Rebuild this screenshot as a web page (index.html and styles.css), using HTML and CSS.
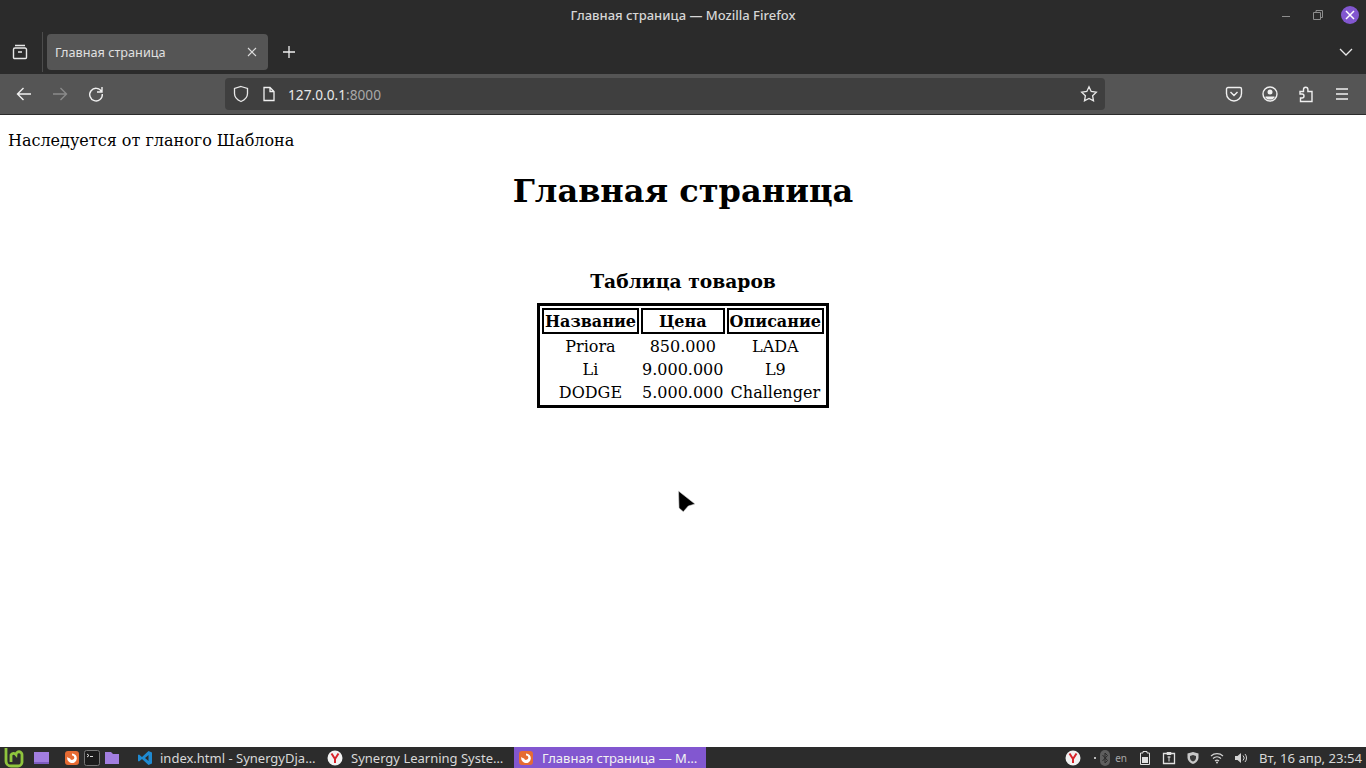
FILE: index.html
```html
<!DOCTYPE html>
<html lang="ru">
  <head>
    <meta charset="UTF-8" />
    <meta name="viewport" content="width=device-width, initial-scale=1.0" />
    <title>Главная страница</title>
    <link rel="stylesheet" href="styles.css">
  </head>
  <body>
    <div class="browser">
      <div class="titlebar">
        <span class="title-text">Главная страница — Mozilla Firefox</span>
        <div class="window-buttons">
          <svg class="win-btn" width="16" height="16" viewBox="0 0 16 16"><path d="M3 9.500h8" stroke="#8d8d8d" stroke-width="1"/></svg>
          <svg class="win-btn" width="16" height="16" viewBox="0 0 16 16"><path d="M3.500 5.500h7v7h-7zM6 5.500V3.500h6.500v7h-2" fill="none" stroke="#8d8d8d" stroke-width="1"/></svg>
          <span class="win-close">
            <svg width="18" height="18" viewBox="0 0 18 18"><path d="M5 5l8 8M13 5l-8 8" stroke="#fff" stroke-width="1.500"/></svg>
          </span>
        </div>
      </div>

      <div class="tabbar">
        <svg class="tab-view" width="18" height="18" viewBox="0 0 18 18"><path d="M4 2.500h10M2.500 6.500a1.500 1.500 0 0 1 1.500-1.500h10a1.500 1.500 0 0 1 1.500 1.500v8a1 1 0 0 1-1 1h-11a1 1 0 0 1-1-1zM7 9h4" fill="none" stroke="#e8e8e8" stroke-width="1.400"/></svg>
        <div class="tab-sep"></div>
        <div class="tab">
          <span class="tab-title">Главная страница</span>
          <svg width="12" height="12" viewBox="0 0 12 12"><path d="M2 2l8 8M10 2l-8 8" stroke="#dcdcdc" stroke-width="1.100"/></svg>
        </div>
        <svg class="new-tab" width="14" height="14" viewBox="0 0 14 14"><path d="M7 1v12M1 7h12" stroke="#f0f0f0" stroke-width="1.300"/></svg>
        <svg class="tab-list" width="14" height="14" viewBox="0 0 14 14"><path d="M1 4l6 6 6-6" fill="none" stroke="#e8e8e8" stroke-width="1.300"/></svg>
      </div>

      <div class="navbar">
        <div class="nav-left">
          <svg width="18" height="18" viewBox="0 0 18 18"><path d="M16 9H2.500M8.500 3l-6 6 6 6" fill="none" stroke="#f0f0f0" stroke-width="1.400"/></svg>
          <svg width="18" height="18" viewBox="0 0 18 18"><path d="M2 9h13.500M9.500 3l6 6-6 6" fill="none" stroke="#8a8a8a" stroke-width="1.400"/></svg>
          <svg width="18" height="18" viewBox="0 0 18 18"><path d="M14.500 6.500A6.300 6.300 0 1 0 15.300 9M15 2v5h-5" fill="none" stroke="#f0f0f0" stroke-width="1.400"/></svg>
        </div>
        <div class="urlbar">
          <svg width="16" height="18" viewBox="0 0 16 18"><path d="M8 1.500l6.500 2v5c0 4-3 6.500-6.500 8-3.500-1.500-6.500-4-6.500-8v-5z" fill="none" stroke="#e8e8e8" stroke-width="1.300"/></svg>
          <svg class="page-icon" width="14" height="16" viewBox="0 0 14 16"><path d="M2 1.500h6l4 4v9H2zM8 1.500v4h4" fill="none" stroke="#f0f0f0" stroke-width="1.300"/></svg>
          <span class="url"><span class="url-host">127.0.0.1</span>:8000</span>
          <svg class="star" width="18" height="18" viewBox="0 0 18 18"><path d="M9 1.800l2.200 4.700 5.100.7-3.700 3.500.9 5.100L9 13.400l-4.500 2.400.9-5.100-3.700-3.500 5.100-.7z" fill="none" stroke="#e8e8e8" stroke-width="1.300"/></svg>
        </div>
        <div class="nav-right">
          <svg width="18" height="18" viewBox="0 0 18 18"><path d="M3 2.500h12a1.500 1.500 0 0 1 1.500 1.500v4.500a7.500 7.500 0 0 1-15 0V4A1.500 1.500 0 0 1 3 2.500zM5.500 7l3.500 3.500L12.500 7" fill="none" stroke="#f0f0f0" stroke-width="1.400"/></svg>
          <svg width="18" height="18" viewBox="0 0 18 18"><circle cx="9" cy="9" r="7" fill="none" stroke="#f0f0f0" stroke-width="1.400"/><circle cx="9" cy="7" r="2.500" fill="#f0f0f0"/><path d="M4.500 11.500h9v1l-2 2h-5l-2-2z" fill="#f0f0f0"/></svg>
          <svg width="18" height="18" viewBox="0 0 18 18"><path d="M3 6.500h3.500V4.500a2.200 2.200 0 0 1 4.400 0v2h4.100v10H3.500v-3.500H5a2 2 0 0 0 0-4H3z" fill="none" stroke="#f0f0f0" stroke-width="1.400"/></svg>
          <svg width="18" height="18" viewBox="0 0 18 18"><path d="M3 4h12M3 9h12M3 14h12" stroke="#f0f0f0" stroke-width="1.400"/></svg>
        </div>
      </div>

      <div class="page">
        <p class="inherit-note">Наследуется от гланого Шаблона</p>
        <h1 class="page-title">Главная страница</h1>
        <table class="goods">
          <caption>Таблица товаров</caption>
          <tr><th>Название</th><th class="price-head">Цена</th><th>Описание</th></tr>
          <tr><td>Priora</td><td>850.000</td><td>LADA</td></tr>
          <tr><td>Li</td><td>9.000.000</td><td>L9</td></tr>
          <tr><td>DODGE</td><td>5.000.000</td><td>Challenger</td></tr>
        </table>
        <svg class="cursor" width="20" height="24" viewBox="0 0 20 24"><path d="M1.500 1l16.500 13-6.700 2-5 5.700L2 18z" fill="#000" stroke="#d8d8d8" stroke-width=".6"/></svg>
      </div>

      <div class="taskbar">
        <svg class="mint" width="20" height="21" viewBox="0 0 20 21"><path d="M2 1v13a5 5 0 0 0 5 5h7a4 4 0 0 0 4-4V8a3 3 0 0 0-6-.5A3 3 0 0 0 7 8v7" fill="none" stroke="#8fc53d" stroke-width="2.800"/></svg>
        <span class="desktop-icon"></span>
        <svg class="launcher-first" width="16" height="16" viewBox="0 0 16 16"><rect x="1" y="1" width="14" height="14" rx="3" fill="#e66b33"/><path d="M8 3.500a4.800 4.800 0 1 1-4.500 3.200c.5 1 1.500 1.600 2.500 1.500A2.200 2.200 0 1 0 8 5.500z" fill="#fff"/></svg>
        <svg class="launcher" width="16" height="16" viewBox="0 0 16 16"><rect x=".5" y=".5" width="15" height="15" rx="2" fill="#1c1c1c" stroke="#777"/><path d="M3 4l2 1.500L3 7M6 6.500h3" fill="none" stroke="#ddd"/></svg>
        <svg class="launcher" width="16" height="16" viewBox="0 0 16 16"><path d="M1 2h6l2 2h6v10H1z" fill="#a27ee0"/></svg>

        <div class="task task-code">
          <svg width="16" height="16" viewBox="0 0 16 16"><path d="M11.500 1L15 2.500v11L11.500 15 5 9l-3 2.500L1 11V5l1-.5L5 7zM11.500 5L8 8l3.500 3z" fill="#1f8ad2" fill-rule="evenodd"/></svg>
          <span>index.html - SynergyDja…</span>
        </div>
        <div class="task task-ya">
          <svg width="16" height="16" viewBox="0 0 16 16"><circle cx="8" cy="8" r="7.500" fill="#f2f2f2"/><path d="M4.500 3.500L8 9l3.500-5.500M8 9v4" fill="none" stroke="#d8232a" stroke-width="2"/></svg>
          <span>Synergy Learning Syste…</span>
        </div>
        <div class="task task-active">
          <svg width="16" height="16" viewBox="0 0 16 16"><rect x="1" y="1" width="14" height="14" rx="3" fill="#e66b33"/><path d="M8 3.500a4.800 4.800 0 1 1-4.500 3.200c.5 1 1.500 1.600 2.500 1.500A2.200 2.200 0 1 0 8 5.500z" fill="#fff"/></svg>
          <span>Главная страница — M…</span>
        </div>

        <div class="tray">
          <svg class="tray-ya" width="16" height="16" viewBox="0 0 16 16"><circle cx="8" cy="8" r="7.500" fill="#f2f2f2"/><path d="M4.500 3.500L8 9l3.500-5.500M8 9v4" fill="none" stroke="#d8232a" stroke-width="2"/></svg>
          <span class="tray-dot"></span>
          <svg class="tray-bt" width="12" height="16" viewBox="0 0 12 16"><rect x="1" y="0" width="10" height="16" rx="5" fill="#5e5e5e"/><path d="M3.500 5l5 5.500L6 13V3l2.500 2.500-5 5.500" fill="none" stroke="#2a2a2a"/></svg>
          <span class="tray-lang">en</span>
          <svg class="tray-batt" width="12" height="14" viewBox="0 0 12 14"><path d="M4 .5h4v1.500h2.500v11.500h-9V2H4z" fill="none" stroke="#e0e0e0"/><rect x="3" y="6" width="6" height="6" fill="#e0e0e0"/></svg>
          <svg class="tray-clip" width="14" height="14" viewBox="0 0 14 14"><path d="M1.500 2.500h11v10h-11z" fill="none" stroke="#e0e0e0" stroke-width="1.300"/><path d="M5 1.500h4v2H5zM7 5.500v5M5.500 6h3" fill="none" stroke="#e0e0e0"/></svg>
          <svg class="tray-shield" width="14" height="14" viewBox="0 0 14 14"><path d="M7 1l5.500 1.500v4c0 3-2.500 5.500-5.500 6.500-3-1-5.500-3.500-5.500-6.500v-4z" fill="#c8c8c8"/><path d="M7 4l3 1v2c0 1.500-1.500 3-3 3.500-1.500-.5-3-2-3-3.500V5z" fill="#3a3a3a"/></svg>
          <svg class="tray-wifi" width="14" height="12" viewBox="0 0 14 12"><path d="M1 4a9 9 0 0 1 12 0M3 6.500a6 6 0 0 1 8 0M5 9a3 3 0 0 1 4 0" fill="none" stroke="#d4d4d4" stroke-width="1.200"/><circle cx="7" cy="10.500" r="1" fill="#d4d4d4"/></svg>
          <svg class="tray-vol" width="14" height="12" viewBox="0 0 14 12"><path d="M1 4h2.500L7 1v10L3.500 8H1z" fill="#d4d4d4"/><path d="M9 3.500a3.500 3.500 0 0 1 0 5M11 2a6 6 0 0 1 0 8" fill="none" stroke="#d4d4d4"/></svg>
          <span class="clock">Вт, 16 апр, 23:54</span>
        </div>
      </div>
    </div>
  </body>
</html>
```

FILE: styles.css
```css
* {
  box-sizing: border-box;
}

body {
  margin: 0;
  height: 768px;
  overflow: hidden;
  background: #fff;
}

.browser {
  display: flex;
  flex-direction: column;
  height: 768px;
  font-family: "Noto Sans", "Open Sans", sans-serif;
}

/* Title bar */
.titlebar {
  position: relative;
  display: flex;
  align-items: center;
  justify-content: center;
  height: 30px;
  background: #2b2b2b;
  color: #d6d6d6;
  font-size: 13px;
  font-weight: 500;
}

.window-buttons {
  position: absolute;
  right: 7px;
  top: 6px;
  display: flex;
  align-items: center;
  gap: 15px;
}

.win-close {
  display: flex;
  align-items: center;
  justify-content: center;
  width: 18px;
  height: 18px;
  border-radius: 50%;
  background: #8257d0;
}

/* Tabs */
.tabbar {
  display: flex;
  align-items: center;
  height: 44px;
  background: #2b2b2b;
}

.tab-view {
  margin-left: 11px;
}

.tab-sep {
  width: 1px;
  height: 40px;
  margin-left: 13px;
  background: #4c4c4c;
}

.tab {
  display: flex;
  align-items: center;
  justify-content: space-between;
  width: 221px;
  height: 36px;
  margin-left: 4px;
  padding: 0 10px 0 8px;
  border-radius: 4px;
  background: #555;
  color: #e0e0e0;
  font-size: 12.700px;
}

.new-tab {
  margin-left: 14px;
}

.tab-list {
  margin-left: auto;
  margin-right: 13px;
}

/* Nav bar */
.navbar {
  display: flex;
  align-items: center;
  height: 41px;
  border-bottom: 1px solid #2b2b2b;
  background: #555;
}

.nav-left {
  display: flex;
  gap: 18px;
  margin-left: 15px;
}

.urlbar {
  display: flex;
  align-items: center;
  width: 880px;
  height: 32px;
  margin-left: 120px;
  padding: 0 7px 0 8px;
  border-radius: 4px;
  background: #3f3f3f;
  color: #f0f0f0;
  font-size: 13.700px;
}

.page-icon {
  margin-left: 13px;
}

.url {
  margin-left: 12px;
  color: #a8a8a8;
}

.url-host {
  color: #e8e8e8;
}

.star {
  margin-left: auto;
}

.nav-right {
  display: flex;
  gap: 18px;
  margin-left: 120px;
}

/* Page content */
.page {
  position: relative;
  flex: 1;
  padding: 16px 8px 0;
  background: #fff;
  color: #000;
  font-family: "DejaVu Serif", serif;
  font-size: 16px;
}

.inherit-note {
  margin: 0 0 22px;
  line-height: 19px;
}

.page-title {
  margin: 0 0 60px;
  font-size: 32px;
  line-height: 38px;
  text-align: center;
}

.goods {
  width: 292px;
  margin: 0 auto;
  border: 3px solid #000;
  border-spacing: 2px;
  line-height: 19px;
}

.goods caption {
  padding-bottom: 11px;
  font-size: 18.720px;
  font-weight: 700;
  line-height: 22px;
}

.goods th {
  padding: 2px 1px 1px;
  border: 2px solid #000;
}

.goods .price-head {
  width: 85px;
}

.goods td {
  padding: 1px;
  text-align: center;
}

.cursor {
  position: absolute;
  left: 677px;
  top: 375px;
}

/* Taskbar */
.taskbar {
  display: flex;
  align-items: center;
  height: 21px;
  background: #2c2c2c;
  color: #d8d8d8;
  font-size: 13px;
}

.mint {
  margin-left: 4px;
}

.desktop-icon {
  width: 15px;
  height: 12px;
  margin-left: 10px;
  background: #a27ee0;
  border-bottom: 2px solid #7d5cc0;
}

.launcher-first {
  margin-left: 15px;
}

.launcher {
  margin-left: 4px;
}

.task {
  display: flex;
  align-items: center;
  gap: 8px;
  height: 21px;
  padding: 0 0 0 8px;
  white-space: nowrap;
}

.task-code {
  width: 190px;
  gap: 7px;
  margin-left: 9px;
}

.task-ya {
  width: 195px;
}

.task-active {
  width: 192px;
  background: #8257d0;
  color: #f2f2f2;
  padding-left: 4px;
}

.tray {
  display: flex;
  align-items: center;
  margin-left: auto;
  padding-right: 4px;
}

.tray-dot {
  width: 2px;
  height: 2px;
  margin-left: 13px;
  background: #bbb;
}

.tray-bt {
  margin-left: 3px;
}

.tray-lang {
  margin-left: 4px;
  color: #a8a8a8;
  font-size: 10px;
}

.tray-batt {
  margin-left: 12px;
}

.tray-clip {
  margin-left: 11px;
}

.tray-shield {
  margin-left: 10px;
}

.tray-wifi {
  margin-left: 10px;
}

.tray-vol {
  margin-left: 10px;
}

.clock {
  margin-left: 11px;
  font-size: 13.100px;
}
```
